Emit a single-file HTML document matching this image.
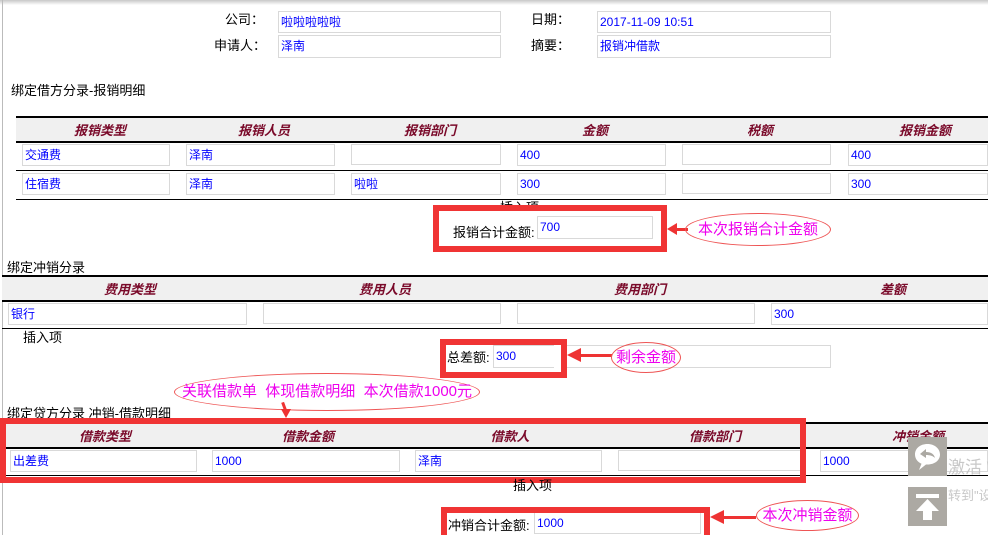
<!DOCTYPE html>
<html><head><meta charset="utf-8"><style>
*{margin:0;padding:0;box-sizing:border-box}
html,body{width:988px;height:535px;overflow:hidden}
body{background:#fff;position:relative;font-family:"Liberation Sans","Noto Sans CJK SC",sans-serif;font-size:12px;color:#000}
div,span{position:absolute}
.t{white-space:nowrap;font-size:13px;line-height:15px}
.i{border:1px solid #d9d9d9;background:#fff;color:#00f;font-size:12px;line-height:20px;padding-left:2px;white-space:nowrap;overflow:hidden}
.h{background:#f0f0f0;border-top:2px solid #000;border-bottom:2px solid #000}
.hl{top:5px;font-style:italic;font-weight:bold;color:#7a0a2a;font-size:13px;line-height:15px;transform:translateX(-50%);white-space:nowrap}
.ln{height:2px;background:#000}
.rb{border:6px solid #f03434}
.el{border:1px solid #e55;border-radius:50%;color:#e0e;text-align:center;white-space:nowrap}
.ar{height:3px;background:#e33}
</style></head><body>
<div style="left:0;top:0;width:988px;height:5px;background:linear-gradient(#c8c8c8,#fff)"></div>
<div style="left:2px;top:0;width:1px;height:535px;background:#bbb"></div>

<div class="t" style="left:225px;top:12px">公司：</div>
<div class="i" style="left:278px;top:11px;width:223px;height:22px">啦啦啦啦啦</div>
<div class="t" style="left:531px;top:12px">日期：</div>
<div class="i" style="left:597px;top:11px;width:234px;height:22px">2017-11-09 10:51</div>
<div class="t" style="left:214px;top:38px">申请人：</div>
<div class="i" style="left:278px;top:35px;width:223px;height:23px">泽南</div>
<div class="t" style="left:531px;top:38px">摘要：</div>
<div class="i" style="left:597px;top:35px;width:234px;height:23px">报销冲借款</div>

<div class="t" style="left:11px;top:83px">绑定借方分录-报销明细</div>
<div class="h" style="left:16px;top:116px;width:972px;height:27px">
<span class="hl" style="left:84px">报销类型</span><span class="hl" style="left:248px">报销人员</span><span class="hl" style="left:414px">报销部门</span><span class="hl" style="left:579px">金额</span><span class="hl" style="left:744px">税额</span><span class="hl" style="left:909px">报销金额</span></div>
<div class="i" style="left:22px;top:144px;width:148px;height:22px">交通费</div>
<div class="i" style="left:186px;top:144px;width:149px;height:22px">泽南</div>
<div class="i" style="left:351px;top:144px;width:150px;height:21px"></div>
<div class="i" style="left:517px;top:144px;width:149px;height:22px">400</div>
<div class="i" style="left:682px;top:144px;width:149px;height:21px"></div>
<div class="i" style="left:848px;top:144px;width:140px;height:22px">400</div>
<div class="ln" style="left:16px;top:170px;width:972px;height:1px"></div>
<div class="i" style="left:22px;top:173px;width:148px;height:22px">住宿费</div>
<div class="i" style="left:186px;top:173px;width:149px;height:22px">泽南</div>
<div class="i" style="left:351px;top:173px;width:150px;height:22px">啦啦</div>
<div class="i" style="left:517px;top:173px;width:149px;height:22px">300</div>
<div class="i" style="left:682px;top:173px;width:149px;height:21px"></div>
<div class="i" style="left:848px;top:173px;width:140px;height:22px">300</div>
<div class="ln" style="left:16px;top:199px;width:972px;height:1px"></div>
<div class="t" style="left:500px;top:200px">插入项</div>
<div class="rb" style="left:433px;top:205px;width:234px;height:47px;background:#fff"></div>
<div class="t" style="left:453px;top:225px">报销合计金额:</div>
<div class="i" style="left:537px;top:216px;width:116px;height:23px">700</div>
<div class="ar" style="left:672px;top:228px;width:16px"></div>
<div style="left:667px;top:223px;width:0;height:0;border-top:6px solid transparent;border-bottom:6px solid transparent;border-right:10px solid #e33"></div>
<div class="el" style="left:685px;top:213px;width:146px;height:33px;line-height:31px;font-size:15px">本次报销合计金额</div>

<div class="t" style="left:7px;top:260px">绑定冲销分录</div>
<div class="h" style="left:2px;top:275px;width:986px;height:27px">
<span class="hl" style="left:128px">费用类型</span><span class="hl" style="left:383px">费用人员</span><span class="hl" style="left:638px">费用部门</span><span class="hl" style="left:891px">差额</span></div>
<div class="i" style="left:8px;top:303px;width:239px;height:22px">银行</div>
<div class="i" style="left:263px;top:303px;width:238px;height:21px"></div>
<div class="i" style="left:517px;top:303px;width:238px;height:21px"></div>
<div class="i" style="left:771px;top:303px;width:217px;height:22px">300</div>
<div class="ln" style="left:2px;top:328px;width:986px;height:1px"></div>
<div class="t" style="left:23px;top:330px">插入项</div>
<div class="i" style="left:555px;top:345px;width:276px;height:23px"></div>
<div class="rb" style="left:440px;top:339px;width:127px;height:39px;background:#fff"></div>
<div class="t" style="left:447px;top:350px">总差额:</div>
<div class="i" style="left:493px;top:345px;width:61px;height:23px;border-right:none">300</div>
<div class="ar" style="left:578px;top:354px;width:34px"></div>
<div style="left:567px;top:348px;width:0;height:0;border-top:7px solid transparent;border-bottom:7px solid transparent;border-right:14px solid #e33"></div>
<div class="el" style="left:611px;top:342px;width:70px;height:31px;line-height:29px;font-size:15px">剩余金额</div>

<div class="el" style="left:174px;top:373px;width:306px;height:38px;line-height:36px;font-size:15px">关联借款单&nbsp; 体现借款明细&nbsp; 本次借款1000元</div>
<div style="left:283px;top:402px;width:3px;height:11px;background:#e33;transform:rotate(-20deg)"></div>
<div style="left:281px;top:409px;width:0;height:0;border-left:5px solid transparent;border-right:5px solid transparent;border-top:9px solid #e33"></div>
<div class="t" style="left:7px;top:406px">绑定贷方分录 冲销-借款明细</div>
<div class="h" style="left:5px;top:422px;width:983px;height:27px">
<span class="hl" style="left:100px">借款类型</span><span class="hl" style="left:303px">借款金额</span><span class="hl" style="left:505px">借款人</span><span class="hl" style="left:710px">借款部门</span><span class="hl" style="left:913px">冲销金额</span></div>
<div class="i" style="left:10px;top:450px;width:187px;height:22px">出差费</div>
<div class="i" style="left:212px;top:450px;width:188px;height:22px">1000</div>
<div class="i" style="left:415px;top:450px;width:187px;height:22px">泽南</div>
<div class="i" style="left:618px;top:450px;width:183px;height:21px"></div>
<div class="i" style="left:820px;top:450px;width:168px;height:22px">1000</div>
<div class="ln" style="left:5px;top:475px;width:983px;height:1px"></div>
<div class="rb" style="left:0;top:418px;width:806px;height:65px"></div>
<div class="t" style="left:513px;top:478px">插入项</div>

<div class="i" style="left:534px;top:512px;width:167px;height:22px">1000</div>
<div class="rb" style="left:441px;top:507px;width:269px;height:34px;border-bottom:none"></div>
<div class="t" style="left:448px;top:518px">冲销合计金额:</div>
<div class="ar" style="left:722px;top:516px;width:34px"></div>
<div style="left:710px;top:510px;width:0;height:0;border-top:7px solid transparent;border-bottom:7px solid transparent;border-right:14px solid #e33"></div>
<div class="el" style="left:756px;top:500px;width:103px;height:31px;line-height:29px;font-size:15px">本次冲销金额</div>

<div class="t" style="left:948px;top:458px;font-size:17px;line-height:20px;color:#c8c8c8">激活 W</div>
<div class="t" style="left:948px;top:488px;font-size:13px;color:#c8c8c8">转到"设</div>
<div style="left:908px;top:437px;width:39px;height:39px;background:#aca9a3">
<svg width="39" height="39" viewBox="0 0 39 39"><path d="M19.5 7c-7.5 0-12.5 4.5-12.5 10.5 0 4 2.5 7.5 6.5 9.2L11 33l7-5.5h1.5c7.5 0 12.5-4.5 12.5-10S27 7 19.5 7z" fill="#fff"/><path d="M12 17l6-5v3c5 0 8 2 9 6-2-2-5-3-9-3v3z" fill="#aca9a3"/></svg></div>
<div style="left:908px;top:487px;width:39px;height:39px;background:#aca9a3">
<svg width="39" height="39" viewBox="0 0 39 39"><rect x="8" y="7" width="23" height="4" fill="#fff"/><path d="M19.5 12L8 24h7v9h9v-9h7z" fill="#fff"/></svg></div>
</body></html>
